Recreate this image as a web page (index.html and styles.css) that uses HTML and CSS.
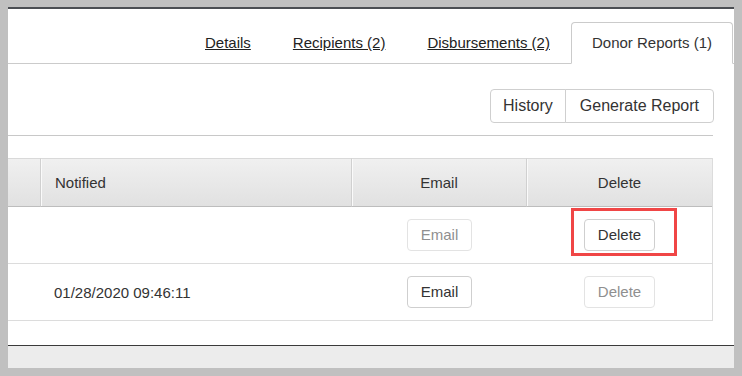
FILE: index.html
```html
<!DOCTYPE html>
<html lang="en">
<head>
<meta charset="utf-8">
<title>Donor Reports</title>
<link rel="stylesheet" href="styles.css">
</head>
<body>
<div class="window">
  <div class="page">
    <nav class="tabs">
      <a class="tab tab-link" href="#">Details</a>
      <a class="tab tab-link" href="#">Recipients (2)</a>
      <a class="tab tab-link" href="#">Disbursements (2)</a>
      <span class="tab tab-active">Donor Reports (1)</span>
    </nav>
    <div class="content">
      <div class="toolbar">
        <div class="btn-group">
          <button class="btn btn-lg btn-first">History</button>
          <button class="btn btn-lg btn-last">Generate Report</button>
        </div>
      </div>
      <table class="grid">
        <colgroup>
          <col class="c1"><col class="c2"><col class="c3"><col class="c4">
        </colgroup>
        <thead>
          <tr>
            <th class="th-cut"></th>
            <th class="th-left">Notified</th>
            <th>Email</th>
            <th class="th-last">Delete</th>
          </tr>
        </thead>
        <tbody>
          <tr>
            <td></td>
            <td class="td-left"></td>
            <td class="td-center"><button class="btn btn-sm" disabled>Email</button></td>
            <td class="td-center td-mark"><button class="btn btn-sm">Delete</button><span class="mark"></span></td>
          </tr>
          <tr>
            <td></td>
            <td class="td-left">01/28/2020 09:46:11</td>
            <td class="td-center"><button class="btn btn-sm">Email</button></td>
            <td class="td-center"><button class="btn btn-sm" disabled>Delete</button></td>
          </tr>
        </tbody>
      </table>
    </div>
  </div>
  <div class="footer"></div>
</div>
</body>
</html>
```
FILE: styles.css
```css
* { box-sizing: border-box; }

html, body {
  margin: 0;
  height: 376px;
}

body {
  background: #c0c0c0;
  padding: 7px 8px 8px 8px;
  font-family: "Liberation Sans", Arial, sans-serif;
  color: #333;
  overflow: hidden;
}

.window {
  height: 361px;
  background: #fff;
  border-top: 2px solid #4b4e53;
  display: flex;
  flex-direction: column;
}

.page {
  flex: 1;
  overflow: hidden;
}

.footer {
  height: 23px;
  border-top: 1px solid #3a3a3a;
  background: #ececec;
}

/* tabs */
.tabs {
  margin-top: 13px;
  padding-right: 1px;
  display: flex;
  justify-content: flex-end;
  border-bottom: 1px solid #cbcbcb;
}

.tab {
  display: block;
  padding: 0 20px;
  font-size: 15px;
  line-height: 40px;
  border: 1px solid transparent;
  border-radius: 4px 4px 0 0;
  margin-bottom: -1px;
  color: #222;
}

.tab-link {
  text-decoration: underline;
}

.tab-active {
  background: #fff;
  border-color: #cbcbcb;
  border-bottom-color: transparent;
  color: #333;
}

/* content */
.content {
  padding: 25px 21px 0 0;
}

.toolbar {
  display: flex;
  justify-content: flex-end;
  padding-bottom: 12px;
  border-bottom: 1px solid #c8c8c8;
}

.btn-group {
  display: flex;
  margin-right: -1px;
}

.btn {
  font-family: "Liberation Sans", Arial, sans-serif;
  background: #fff;
  color: #333;
  border: 1px solid #cfcfcf;
  border-radius: 4px;
  margin: 0;
}

.btn-lg {
  font-size: 16px;
  line-height: 20px;
  padding: 6px 12px;
}

.btn-first {
  border-radius: 4px 0 0 4px;
}

.btn-last {
  border-radius: 0 4px 4px 0;
  margin-left: -1px;
  padding: 6px 14px;
}

.btn-sm {
  font-size: 15px;
  line-height: 20px;
  padding: 5px 13px;
}

.btn:disabled {
  color: #8f8f8f;
  border-color: #e3e3e3;
}

/* table */
.grid {
  margin-top: 22px;
  width: 705px;
  table-layout: fixed;
  border-collapse: separate;
  border-spacing: 0;
  border-right: 1px solid #dcdcdc;
}

.c1 { width: 33px; }
.c2 { width: 311px; }
.c3 { width: 175px; }
.c4 { width: 185px; }

.grid th {
  height: 49px;
  padding: 0;
  font-size: 15px;
  font-weight: normal;
  text-align: center;
  vertical-align: middle;
  color: #333;
  background: linear-gradient(#f0f0f0, #e1e1e1);
  border-top: 1px solid #d9d9d9;
  border-bottom: 1px solid #bdbdbd;
  border-right: 1px solid #d0d0d0;
  box-shadow: inset 1px 0 0 #fafafa;
}

.grid th.th-cut {
  box-shadow: none;
}

.grid th.th-last {
  border-right: none;
}

.grid th.th-left {
  text-align: left;
  padding-left: 14px;
}

.grid td {
  height: 57px;
  padding: 0;
  font-size: 15px;
  vertical-align: middle;
  border-bottom: 1px solid #dcdcdc;
}

.td-left {
  padding-left: 13px !important;
}

.td-center {
  text-align: center;
}

.td-mark {
  position: relative;
}

.mark {
  position: absolute;
  left: 44px;
  top: 1px;
  width: 106px;
  height: 48px;
  border: 3px solid #f04646;
}
```
